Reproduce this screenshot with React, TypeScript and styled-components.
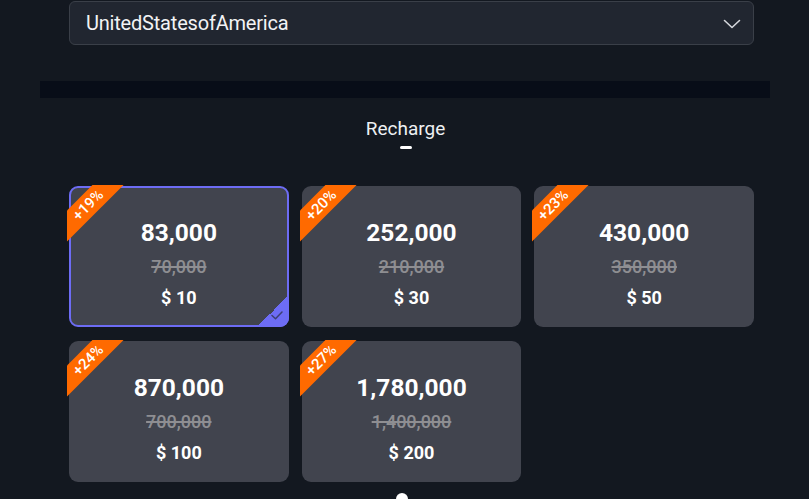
import React from 'react';
import styled, { createGlobalStyle } from 'styled-components';

const GlobalStyle = createGlobalStyle`
  html, body {
    margin: 0;
    padding: 0;
    background: #131820;
    font-family: Roboto, "Liberation Sans", sans-serif;
    color: #fff;
    overflow: hidden;
  }
`;

type Pack = {
  amount: string;
  original: string;
  price: number;
  bonus: number;
};

const packs: Pack[] = [
  { amount: '83,000', original: '70,000', price: 10, bonus: 19 },
  { amount: '252,000', original: '210,000', price: 30, bonus: 20 },
  { amount: '430,000', original: '350,000', price: 50, bonus: 23 },
  { amount: '870,000', original: '700,000', price: 100, bonus: 24 },
  { amount: '1,780,000', original: '1,400,000', price: 200, bonus: 27 },
];

export default function App() {
  return (
    <>
      <GlobalStyle />
      <Page>
        <Container>
          <Inner>
            <Select>
              <span>UnitedStatesofAmerica</span>
              <svg width="18" height="10" viewBox="0 0 18 10" fill="none">
                <path
                  d="M1.5 1.5 L9 8.5 L16.5 1.5"
                  stroke="#d5d7dc"
                  strokeWidth="1.6"
                  strokeLinecap="round"
                  strokeLinejoin="round"
                />
              </svg>
            </Select>
          </Inner>

          <Divider />

          <Tabs>
            <Tab>Recharge</Tab>
            <TabMark />
          </Tabs>

          <Inner>
            <Grid>
              {packs.map((p, i) => (
                <Card key={p.amount} $selected={i === 0}>
                  <RibbonClip>
                    <Ribbon>+{p.bonus}%</Ribbon>
                  </RibbonClip>
                  <Amount>{p.amount}</Amount>
                  <Original>{p.original}</Original>
                  <Price>$ {p.price}</Price>
                  {i === 0 && (
                    <Check>
                      <svg width="12" height="9" viewBox="0 0 12 9" fill="none">
                        <path
                          d="M1 4.5 L4.5 7.8 L11 1"
                          stroke="#3c3f72"
                          strokeWidth="1.5"
                          strokeLinecap="round"
                          strokeLinejoin="round"
                        />
                      </svg>
                    </Check>
                  )}
                </Card>
              ))}
            </Grid>
          </Inner>

          <Dot />
        </Container>
      </Page>
    </>
  );
}

const Page = styled.div`
  width: 809px;
  padding-left: 40px;
  box-sizing: border-box;
`;

const Container = styled.div`
  width: 730px;
  display: flex;
  flex-direction: column;
`;

const Inner = styled.div`
  width: 685px;
  margin-left: 29px;
`;

const Select = styled.div`
  box-sizing: border-box;
  margin-top: 1px;
  height: 44px;
  border: 1px solid #3a3f48;
  border-radius: 6px;
  background: #212630;
  display: flex;
  align-items: center;
  justify-content: space-between;
  padding: 0 12px 0 16px;
  font-size: 20px;
  color: #f2f3f5;
  letter-spacing: -0.2px;

  & > svg {
    margin-top: 1px;
  }
`;

const Divider = styled.div`
  height: 17px;
  margin-top: 36px;
  background: #080d18;
`;

const Tabs = styled.div`
  display: flex;
  flex-direction: column;
  align-items: center;
  margin-top: 19px;
  margin-left: 1px;
`;

const Tab = styled.div`
  font-size: 19px;
  line-height: 24px;
  color: #eef0f3;
`;

const TabMark = styled.div`
  width: 12px;
  height: 3px;
  border-radius: 2px;
  background: #fff;
  margin-top: 5px;
`;

const Grid = styled.div`
  display: grid;
  grid-template-columns: repeat(3, 1fr);
  column-gap: 13px;
  row-gap: 14px;
  margin-top: 37px;
`;

const Card = styled.div<{ $selected?: boolean }>`
  position: relative;
  box-sizing: border-box;
  height: 141px;
  border-radius: 9px;
  background: #41444e;
  border: 2px solid ${({ $selected }) => ($selected ? '#6d6cf4' : 'transparent')};
  display: flex;
  flex-direction: column;
  align-items: center;
  padding-top: 30px;
`;

const RibbonClip = styled.div`
  position: absolute;
  top: -3px;
  left: -4px;
  width: 64px;
  height: 64px;
  overflow: hidden;
  pointer-events: none;
`;

const Ribbon = styled.div`
  position: absolute;
  width: 92px;
  height: 22px;
  left: -25px;
  top: 9px;
  background: #ff6a00;
  transform: rotate(-45deg);
  display: flex;
  align-items: center;
  justify-content: center;
  font-size: 15px;
  font-weight: 500;
  color: #fff;
  box-sizing: border-box;
`;

const Amount = styled.div`
  font-size: 24.5px;
  font-weight: 700;
  line-height: 30px;
  color: #fff;
`;

const Original = styled.div`
  font-size: 18px;
  font-weight: 500;
  line-height: 22px;
  margin-top: 8px;
  color: #8e8e92;
  text-decoration: line-through;
  text-decoration-thickness: 1.5px;
`;

const Price = styled.div`
  font-size: 18px;
  font-weight: 700;
  line-height: 22px;
  margin-top: 9px;
  color: #fff;
`;

const Check = styled.div`
  position: absolute;
  right: -2px;
  bottom: -2px;
  width: 33px;
  height: 31px;
  border-bottom-right-radius: 9px;
  background: linear-gradient(135deg, transparent 50%, #6d6cf4 50%);
  display: flex;
  align-items: flex-end;
  justify-content: flex-end;
  padding: 0 6px 7px 0;
  box-sizing: border-box;
`;

const Dot = styled.div`
  width: 12px;
  height: 12px;
  border-radius: 50%;
  background: #fff;
  margin-top: 11px;
  margin-left: 356px;
`;
